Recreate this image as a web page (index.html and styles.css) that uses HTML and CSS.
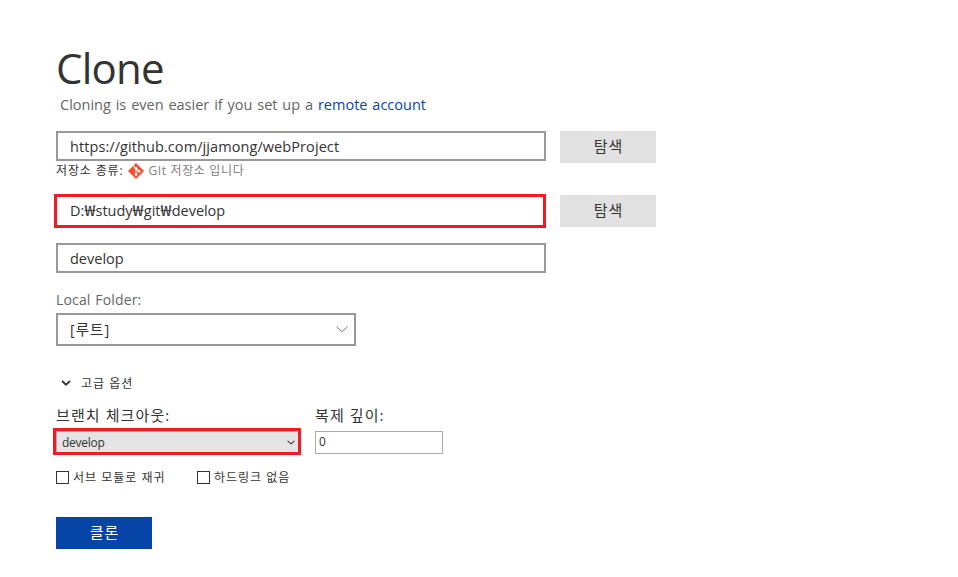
FILE: index.html
```html
<!DOCTYPE html>
<html lang="ko">
<head>
<meta charset="utf-8">
<title>Clone</title>
<link rel="stylesheet" href="styles.css">
</head>
<body>
<main class="page">
  <h1 class="title"><span>Clone</span></h1>
  <p class="subtitle"><span>Cloning is even easier if you set up a <a class="link">remote account</a></span></p>
  <div class="row row-url">
    <div class="field"><span class="t-url">https://github.com/jjamong/webProject</span></div>
    <button class="browse">탐색</button>
  </div>
  <div class="repo">
    <span class="repo-label">저장소 종류:</span>
    <svg class="git" viewBox="0 0 16 16"><path d="M8 0 16 8 8 16 0 8Z" fill="#f4512c"/><path d="M5.4 2.8 8 5.4V11.5M8 5.4 11 8.2" fill="none" stroke="#fff" stroke-width="1.1"/><circle cx="8" cy="5.3" r="1.3" fill="#fff"/><circle cx="8" cy="11.4" r="1.3" fill="#fff"/><circle cx="11" cy="8.2" r="1.3" fill="#fff"/></svg>
    <span class="repo-type">GIt 저장소 입니다</span>
  </div>
  <div class="row row-path">
    <div class="field marked"><span class="t-path">D:<span class="won">₩</span>study<span class="won">₩</span>git<span class="won">₩</span>develop</span></div>
    <button class="browse">탐색</button>
  </div>
  <div class="field name"><span class="t-name">develop</span></div>
  <div class="folder-label"><span>Local Folder:</span></div>
  <div class="field folder"><span class="t-root">[루트]</span>
    <svg class="chev" viewBox="0 0 12 7"><path d="M.5.7 6 5.7 11.5.7" fill="none" stroke="#808080"/></svg>
  </div>
  <div class="advanced">
    <svg class="chev-bold" viewBox="0 0 10 6"><path d="M1 1 5 4.7 9 1" fill="none" stroke="#333" stroke-width="1.8"/></svg>
    <span>고급 옵션</span>
  </div>
  <div class="options">
    <div class="branch">
      <div class="label"><span class="t-branch">브랜치 체크아웃:</span></div>
      <div class="combo"><span class="t-combo">develop</span>
        <svg class="chev-small" viewBox="0 0 8 5"><path d="M.6.8 4 3.8 7.4.8" fill="none" stroke="#333" stroke-width="1.1"/></svg>
      </div>
    </div>
    <div class="depth">
      <div class="label"><span class="t-depth">복제 깊이:</span></div>
      <div class="number">0</div>
    </div>
  </div>
  <div class="checks">
    <div class="check"><i class="box"></i><span class="t-sub">서브 모듈로 재귀</span></div>
    <div class="check"><i class="box"></i><span class="t-hard">하드링크 없음</span></div>
  </div>
  <button class="clone">클론</button>
</main>
</body>
</html>
```
FILE: styles.css
```css
* { box-sizing: border-box; }
body {
  margin: 0;
  background: #fff;
  color: #333;
  font-family: "Open Sans", "Noto Sans CJK KR", sans-serif;
  font-size: 14.5px;
  white-space: nowrap;
}
.page {
  display: flex;
  flex-direction: column;
  align-items: flex-start;
  width: 958px;
  height: 577px;
  padding: 44px 0 0 56px;
}
.title {
  height: 48px;
  margin: 0;
  font-size: 42px;
  font-weight: 400;
  letter-spacing: -0.8px;
  line-height: 47px;
}
.subtitle {
  height: 24px;
  margin: 0 0 15px 4px;
  color: #666;
  line-height: 25px;
  word-spacing: 1.1px;
}
.link { color: #0645a5; }
.row { display: flex; gap: 14px; }
.field {
  display: flex;
  align-items: center;
  width: 490px;
  height: 30px;
  padding-left: 12px;
  border: 2px solid #999;
}
.t-url { letter-spacing: 0.08px; }
.browse, .clone {
  width: 96px;
  height: 32px;
  padding: 0 0 1px 1px;
  border: 0;
  background: #e1e1e1;
  color: #333;
  font: inherit;
  font-size: 15px;
  letter-spacing: 1px;
  line-height: 31px;
}
.repo {
  display: flex;
  align-items: center;
  height: 16px;
  margin-top: 1px;
  font-size: 12px;
  line-height: 14px;
}
.repo-label { padding-bottom: 3px; letter-spacing: 0.85px; }
.git { width: 16px; height: 16px; margin: -2px 4px 0 5px; }
.repo-type { padding-bottom: 3px; color: #808080; letter-spacing: 0.65px; }
.row-path { margin: 14px 0 0 -2px; height: 34px; align-items: center; }
.marked {
  width: 492px;
  height: 34px;
  padding-left: 13px;
  border: 3px solid #ee1c24;
}
.t-path { line-height: 20px; letter-spacing: -0.05px; }
.won {
  display: inline-block;
  margin: 0 1.7px;
  line-height: 1;
  transform: scaleX(1.35);
}
.name { margin-top: 15px; }
.folder-label {
  height: 24px;
  margin-top: 16px;
  color: #666;
  font-size: 14px;
  letter-spacing: 0.15px;
  line-height: 22px;
  word-spacing: 1px;
}
.folder {
  justify-content: space-between;
  width: 300px;
  height: 33px;
  padding-right: 6px;
}
.t-root { padding-bottom: 3px; letter-spacing: 1px; }
.chev { width: 12px; height: 7px; }
.advanced {
  display: flex;
  align-items: center;
  height: 20px;
  margin: 27px 0 0 5px;
  font-size: 12px;
  letter-spacing: 1px;
}
.chev-bold { width: 10px; height: 6px; margin-right: 10px; }
.options { display: flex; gap: 14px; margin: 10px 0 0 -3px; }
.branch { width: 248px; }
.label { height: 25px; font-size: 15px; letter-spacing: 1.1px; line-height: 24px; }
.t-branch { margin-left: 3px; }
.combo {
  display: flex;
  align-items: center;
  justify-content: space-between;
  height: 27px;
  padding: 0 3px 0 5px;
  border: 3px solid #ee1c24;
  background: #e5e5e5;
  box-shadow: inset 1px 1px #ababab;
  font-size: 12px;
}
.t-combo { padding: 2px 0 0 1px; letter-spacing: -0.25px; }
.chev-small { width: 8px; height: 5px; margin-top: 2px; }
.number {
  width: 128px;
  height: 23px;
  margin-top: 3px;
  padding-left: 3px;
  border: 1px solid #ababab;
  font-size: 12px;
  line-height: 20px;
}
.checks { display: flex; height: 20px; margin-top: 12px; font-size: 12px; letter-spacing: 1px; }
.check { display: flex; align-items: center; width: 141px; }
.box { width: 13px; height: 13px; margin-right: 4px; border: 1px solid #333; }
.clone { margin-top: 30px; background: #0645a5; color: #fff; }
```
